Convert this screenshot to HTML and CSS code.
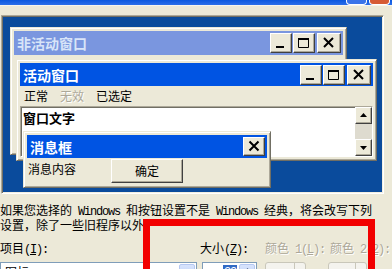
FILE: index.html
```html
<!DOCTYPE html>
<html lang="zh-CN">
<head>
<meta charset="utf-8">
<title>外观</title>
<link rel="stylesheet" href="styles.css">
</head>
<body>
<div class="topbar"><span class="tb-btn tb-min"></span><span class="tb-btn tb-close"></span></div>

<div class="preview">
  <div class="win inactive">
    <div class="title">
      <span class="title-text">非活动窗口</span>
      <div class="caps">
        <span class="cap"><svg width="20" height="18" viewBox="0 0 20 18"><rect x="5" y="12" width="8" height="2" fill="#000"/></svg></span>
        <span class="cap"><svg width="20" height="18" viewBox="0 0 20 18"><path d="M4.5 4.5h10v9h-10z" fill="none" stroke="#000"/><rect x="4" y="4" width="11" height="2" fill="#000"/></svg></span>
        <span class="cap cap-x"><svg width="22" height="18" viewBox="0 0 22 18"><path d="M6 4l9 9M15 4l-9 9" stroke="#000" stroke-width="2"/></svg></span>
      </div>
    </div>
  </div>

  <div class="win active">
    <div class="title">
      <span class="title-text">活动窗口</span>
      <div class="caps">
        <span class="cap"><svg width="20" height="18" viewBox="0 0 20 18"><rect x="5" y="12" width="8" height="2" fill="#000"/></svg></span>
        <span class="cap"><svg width="20" height="18" viewBox="0 0 20 18"><path d="M4.5 4.5h10v9h-10z" fill="none" stroke="#000"/><rect x="4" y="4" width="11" height="2" fill="#000"/></svg></span>
        <span class="cap cap-x"><svg width="22" height="18" viewBox="0 0 22 18"><path d="M6 4l9 9M15 4l-9 9" stroke="#000" stroke-width="2"/></svg></span>
      </div>
    </div>
    <div class="menu"><span>正常</span><span class="dis">无效</span><span>已选定</span></div>
    <div class="textarea">
      <span class="wtext">窗口文字</span>
      <div class="vscroll">
        <span class="sbtn"><svg width="15" height="15" viewBox="0 0 15 15"><path d="M7.5 5l3.5 4h-7z" fill="#000"/></svg></span>
        <span class="strack"></span>
        <span class="sbtn"><svg width="15" height="15" viewBox="0 0 15 15"><path d="M4 6h7l-3.5 4z" fill="#000"/></svg></span>
      </div>
    </div>
  </div>

  <div class="win msgbox">
    <div class="title">
      <span class="title-text">消息框</span>
      <div class="caps">
        <span class="cap cap-x"><svg width="20" height="17" viewBox="0 0 20 17"><path d="M5.5 3.5l9 9M14.5 3.5l-9 9" stroke="#000" stroke-width="2"/></svg></span>
      </div>
    </div>
    <div class="msgbody">
      <span class="msgtext">消息内容</span>
      <span class="okbtn">确定</span>
    </div>
  </div>
</div>

<div class="note">
  <div class="line">如果您选择的<span class="mono"> Windows </span>和按钮设置不是<span class="mono"> Windows </span>经典，将会改写下列</div>
  <div class="line">设置，除了一些旧程序以外</div>
</div>

<div class="fields">
  <span class="lbl">项目<span class="mono">(<u>I</u>):</span></span>
  <span class="lbl">大小<span class="mono">(<u>Z</u>):</span></span>
  <span class="lbl dis">颜色<span class="mono"> 1(<u>L</u>):</span></span>
  <span class="lbl dis">颜色<span class="mono"> 2(<u>2</u>):</span></span>

  <div class="combo"><span class="combo-text">图标</span><span class="combo-btn"><svg width="9" height="6" viewBox="0 0 9 6"><path d="M1 1l3.5 3.5L8 1" fill="none" stroke="#4d6185" stroke-width="2"/></svg></span></div>
  <div class="spin"><span class="spin-val">32</span><span class="spin-btn"><svg width="7" height="4" viewBox="0 0 7 4"><path d="M3.5 0L7 4H0z" fill="#4d6185"/></svg></span></div>
  <div class="colbtn c1"><span class="swatch"></span><span class="split"></span></div>
  <div class="colbtn c2"><span class="swatch"></span><span class="split"></span></div>
</div>

<div class="redbox"></div>
</body>
</html>
```

FILE: styles.css
```css
html, body {
  margin: 0;
  padding: 0;
}
body {
  width: 392px;
  height: 269px;
  overflow: hidden;
  position: relative;
  background: #ece9d8;
  font-family: "Noto Sans CJK SC", sans-serif;
  font-size: 12px;
  color: #000;
}

.topbar {
  height: 5px;
  background: linear-gradient(#0b58df, #2c6fe9);
  border-bottom: 1px solid #f7f5ec;
  display: flex;
  justify-content: flex-end;
  padding-right: 2px;
}
.tb-btn {
  width: 19px;
  height: 4px;
  border: 1px solid #fff;
  border-top: none;
  border-radius: 0 0 4px 4px;
  margin-left: 2px;
}
.tb-min { background: #3a74ea; }
.tb-close { background: #d65b35; }

.preview {
  position: relative;
  margin: 9px 0 0 1px;
  width: 381px;
  height: 177px;
  background: #0a4b9c;
  border: 1px solid;
  border-color: #aca899 #fff #fff #aca899;
  box-shadow: inset 1px 1px #716f64, inset -1px -1px #f1efe2;
}

.win {
  position: absolute;
  box-sizing: border-box;
  background: #ece9d8;
  border: 1px solid;
  border-color: #ece9d8 #716f64 #716f64 #ece9d8;
  box-shadow: inset 1px 1px #fff, inset -1px -1px #aca899;
  padding: 3px;
}
.inactive { left: 8px; top: 11px; width: 337px; height: 128px; }
.active { left: 14px; top: 43px; width: 361px; height: 102px; }
.msgbox { left: 21px; top: 115px; width: 248px; height: 57px; }

.title {
  height: 24px;
  display: flex;
  align-items: center;
  justify-content: space-between;
  padding: 0 2px 0 3px;
  font-size: 14px;
  font-weight: bold;
  line-height: 16px;
}
.inactive .title { background: #7a96df; color: #d8e4f8; }
.active .title { background: #0054e3; color: #fff; height: 23px; }
.msgbox .title { background: #0054e3; color: #fff; height: 23px; }

.caps { display: flex; }
.cap {
  box-sizing: border-box;
  width: 22px;
  height: 20px;
  background: #ece9d8;
  border: 1px solid;
  border-color: #fff #404040 #404040 #fff;
  box-shadow: inset -1px -1px #aca899;
  display: flex;
  margin-left: 1px;
}
.cap-x { margin-left: 2px; width: 24px; }
.msgbox .cap { width: 22px; height: 19px; }

.menu {
  height: 20px;
  display: flex;
  gap: 12px;
  align-items: center;
  padding-left: 4px;
  line-height: 16px;
}
.dis {
  color: #aca899;
  text-shadow: 1px 1px #fff;
}

.textarea {
  height: 51px;
  box-sizing: border-box;
  background: #fff;
  border: 1px solid;
  border-color: #aca899 #fff #fff #aca899;
  box-shadow: inset 1px 1px #716f64;
  display: flex;
  justify-content: space-between;
  padding: 1px 0 0 2px;
}
.wtext {
  font-size: 13px;
  font-weight: bold;
  line-height: 16px;
  padding-top: 2px;
}
.vscroll {
  width: 17px;
  display: flex;
  flex-direction: column;
  margin-top: -1px;
}
.sbtn {
  box-sizing: border-box;
  width: 17px;
  height: 17px;
  background: #ece9d8;
  border: 1px solid;
  border-color: #fff #404040 #404040 #fff;
  box-shadow: inset -1px -1px #aca899;
  display: flex;
}
.strack {
  flex: 1;
  background: #dedbcf;
}

.msgbody {
  height: 26px;
  display: flex;
  align-items: flex-start;
}
.msgtext {
  width: 83px;
  padding-left: 1px;
  line-height: 16px;
  padding-top: 3px;
}
.okbtn {
  box-sizing: border-box;
  margin-top: 1px;
  width: 72px;
  height: 24px;
  background: #ece9d8;
  border: 1px solid;
  border-color: #fff #404040 #404040 #fff;
  box-shadow: inset -1px -1px #aca899;
  display: flex;
  align-items: center;
  justify-content: center;
  line-height: 16px;
}

.note {
  margin-top: 8px;
}
.line {
  height: 15px;
  line-height: 15px;
  white-space: nowrap;
}
.mono {
  font-family: "Liberation Mono", monospace;
  font-size: 12px;
  letter-spacing: -1.2px;
}

.fields {
  margin-top: 8px;
  display: grid;
  grid-template-columns: 200px 65px 65px 62px;
  grid-template-rows: 15px 22px;
  row-gap: 7px;
  align-items: start;
}
.lbl {
  height: 15px;
  line-height: 15px;
  white-space: nowrap;
}
.combo {
  box-sizing: border-box;
  width: 197px;
  height: 21px;
  background: #fff;
  border: 1px solid #7f9db9;
  display: flex;
  justify-content: space-between;
  padding: 1px;
}
.combo-text { padding-left: 3px; line-height: 16px; }
.combo-btn, .spin-btn {
  width: 16px;
  background: linear-gradient(#d8e4fc, #b9cdf8);
  border: 1px solid #b5c8f2;
  box-sizing: border-box;
  display: flex;
  align-items: center;
  justify-content: center;
  border-radius: 2px;
}
.spin {
  box-sizing: border-box;
  margin-left: 2px;
  width: 55px;
  height: 21px;
  background: #fff;
  border: 1px solid #7f9db9;
  display: flex;
  justify-content: flex-end;
  padding: 1px;
}
.spin-val {
  background: #316ac5;
  color: #fff;
  font-family: "Liberation Mono", monospace;
  letter-spacing: -1.2px;
  line-height: 14px;
  height: 14px;
  padding: 1px 1px 0 1px;
  margin: 1px 2px 0 0;
}
.spin-btn { align-items: flex-start; padding-top: 3px; }
.colbtn {
  box-sizing: border-box;
  height: 22px;
  border: 1px solid #c9c7ba;
  border-radius: 3px;
  background: #f4f3ee;
  display: flex;
  justify-content: flex-end;
}
.c1 { width: 41px; }
.c2 { width: 39px; margin-left: -2px; }
.swatch { flex: 1; }
.split {
  width: 10px;
  border-left: 1px solid #c9c7ba;
}

.redbox {
  position: absolute;
  left: 143px;
  top: 219px;
  width: 232px;
  height: 100px;
  box-sizing: border-box;
  border: 7px solid #f20000;
}
```
